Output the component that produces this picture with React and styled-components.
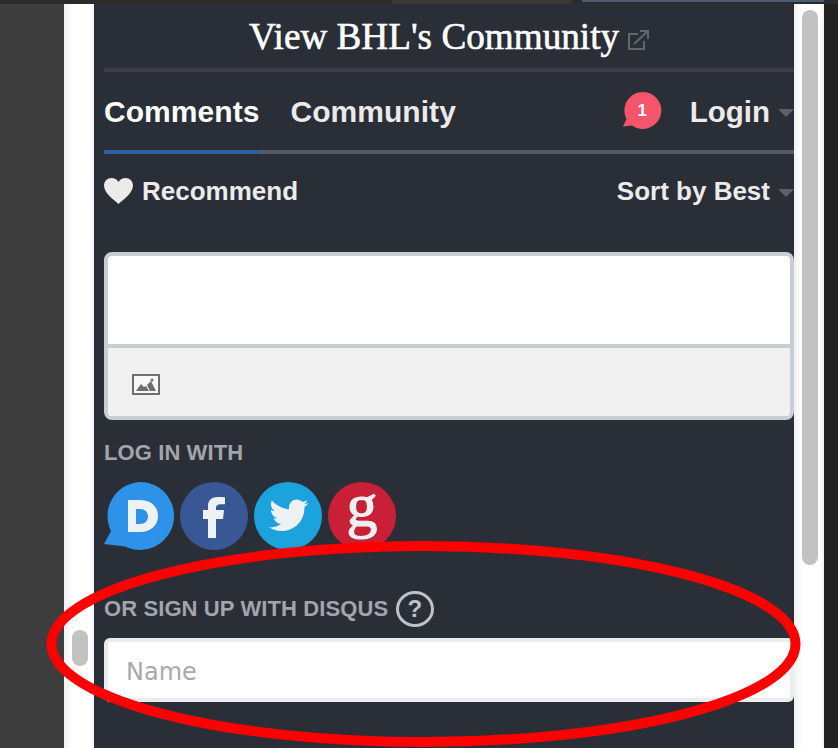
import React from "react";
import styled, { createGlobalStyle } from "styled-components";

const Global = createGlobalStyle`
    html, body {
        margin: 0;
        padding: 0;
        height: 100%;
        overflow: hidden;
        background: #222222;
    }
`

const Page = styled.div`
    position: relative;
    width: 838px;
    height: 748px;
    overflow: hidden;
    display: flex;
    flex-direction: column;
`

const TopStrip = styled.div`
    height: 4px;
    flex-shrink: 0;
    display: flex;
    align-items: flex-start;
    background: #2b2b2b;
`

const TopSegment = styled.div`
    width: ${(p) => p.$w}px;
    height: ${(p) => p.$h}px;
    background: ${(p) => p.$color};
`

const Body = styled.div`
    flex: 1;
    display: flex;
    min-height: 0;
`

const LeftSide = styled.div`
    width: 64px;
    background: #3d3d3d;
`

const RightSide = styled.div`
    width: 14px;
    background: #222222;
`

const Gutter = styled.div`
    position: relative;
    width: 30px;
    background: linear-gradient(to right, #f1f1f1 0, #ffffff 8px, #ffffff 26px, #f1f1f1 100%);
`

const Thumb = styled.div`
    position: absolute;
    left: 8px;
    top: ${(p) => p.$top}px;
    width: 16px;
    height: ${(p) => p.$h}px;
    border-radius: 8px;
    background: #c2c2c2;
`

const Panel = styled.div`
    width: 700px;
    background: #2a2e37;
    padding: 0 0 0 10px;
    box-sizing: border-box;
    font-family: "Liberation Sans", Arial, sans-serif;
`

const TitleRow = styled.div`
    height: 64px;
    border-bottom: 4px solid #3a3d46;
    display: flex;
    align-items: center;
    justify-content: center;
    gap: 8px;
`

const Title = styled.h1`
    margin: 0;
    font-family: "Liberation Serif", Georgia, serif;
    font-size: 37.2px;
    font-weight: 400;
    color: #ffffff;
    -webkit-text-stroke: 0.6px #ffffff;
`

const Tabs = styled.div`
    height: 78px;
    border-bottom: 4px solid #585a63;
    display: flex;
    align-items: center;
`

const Tab = styled.div`
    font-size: 30px;
    font-weight: 700;
    letter-spacing: 0.05px;
    color: ${(p) => (p.$active ? "#ffffff" : "#eaeaea")};
    margin-right: 31px;
    height: 82px;
    margin-bottom: -4px;
    padding-top: 2px;
    box-sizing: border-box;
    display: flex;
    align-items: center;
    border-bottom: 4px solid ${(p) => (p.$active ? "#2a5f9e" : "transparent")};
`

const Spacer = styled.div`
    flex: 1;
`

const Badge = styled.div`
    position: relative;
    width: 38px;
    height: 38px;
    margin-right: 29px;
`

const BadgeCount = styled.span`
    position: absolute;
    left: 1px;
    right: 0;
    top: 9px;
    text-align: center;
    font-size: 17px;
    line-height: 20px;
    font-weight: 700;
    color: #ffffff;
`

const MenuLabel = styled.div`
    display: flex;
    align-items: center;
    gap: 8px;
    font-size: ${(p) => p.$size}px;
    padding-top: 2px;
    font-weight: 700;
    color: #ebebeb;
`

const Caret = styled.span`
    width: 0;
    height: 0;
    border-left: 8px solid transparent;
    border-right: 8px solid transparent;
    border-top: 8px solid #5f616a;
    margin-top: 2px;
`

const ActionRow = styled.div`
    height: 73px;
    display: flex;
    align-items: center;
    justify-content: space-between;
`

const Recommend = styled.div`
    display: flex;
    align-items: center;
    gap: 9px;
    font-size: 26px;
    font-weight: 700;
    color: #ebebeb;
`

const RecommendText = styled.span`
    padding-top: 2px;
`

const Editor = styled.div`
    margin-top: 25px;
    height: 168px;
    border: 4px solid #c6ced1;
    border-radius: 8px;
    background: #ffffff;
    box-sizing: border-box;
    display: flex;
    flex-direction: column;
    overflow: hidden;
`

const EditorInput = styled.div`
    height: 88px;
    border-bottom: 4px solid #c6ced1;
`

const EditorBar = styled.div`
    flex: 1;
    background: #f1f1f1;
    display: flex;
    align-items: center;
    padding: 4px 0 0 24px;
`

const SectionLabel = styled.div`
    font-size: 22px;
    line-height: 26px;
    font-weight: 700;
    letter-spacing: 0.1px;
    color: #a3a5ab;
    display: flex;
    align-items: center;
    gap: 8px;
`

const LoginSection = styled.div`
    margin-top: 20px;
`

const Socials = styled.div`
    display: flex;
    gap: 6px;
    margin-top: 16px;
    height: 68px;
`

const SignupSection = styled.div`
    margin-top: 41px;
`

const NameInput = styled.div`
    margin-top: 11px;
    height: 64px;
    border: 4px solid #e9edee;
    border-radius: 6px;
    background: #ffffff;
    box-sizing: border-box;
    display: flex;
    align-items: center;
    padding: 3px 0 0 18px;
    font-family: "DejaVu Sans", "Liberation Sans", sans-serif;
    font-size: 24px;
    color: #a9a9a9;
`

const HelpIcon = styled.svg`
    width: 38px;
    height: 36px;
    display: block;
`

const LinkIcon = styled.svg`
    width: 22px;
    height: 20px;
    margin-top: 8px;
`

const SocialCircle = styled.svg`
    width: 68px;
    height: 68px;
    overflow: visible;
`

const Annotation = styled.svg`
    position: absolute;
    left: 0;
    top: 0;
    pointer-events: none;
`

const ExternalLink = () => (
    <LinkIcon viewBox="0 0 22 20" fill="none" stroke="#63666d" strokeWidth="2">
        <path d="M11 4H2v15h15v-8" />
        <path d="M7 14L20 2M13 1h8v8" />
    </LinkIcon>
);

const Heart = () => (
    <svg width="29" height="26" viewBox="0 0 29 26">
        <path fill="#ebebeb" d="M14.5 26C11 22.5 0 15.500 0 7.500 0 3 3.500 0 7.500 0c3 0 5.500 1.500 7 4 1.500-2.500 4-4 7-4C25.500 0 29 3 29 7.500c0 8-11 15-14.500 18.500z" />
    </svg>
);

const ImageIcon = () => (
    <svg width="28" height="21" viewBox="0 0 28 21">
        <rect x="1" y="1" width="26" height="19" fill="#f8f8f8" stroke="#6e6e6e" strokeWidth="2" />
        <path fill="#6e6e6e" d="M4 17l5-7 3 3 2-1 3 5zM15 11l4-4 5 10h-6z" />
        <circle cx="20" cy="6" r="1.500" fill="#6e6e6e" />
    </svg>
);

const Circle = ({ color, children }) => (
    <SocialCircle viewBox="0 0 68 68">
        <circle cx="34" cy="34" r="34" fill={color} />
        {children}
    </SocialCircle>
);

const DisqusIcon = () => (
    <svg width="70" height="68" viewBox="0 0 70 68">
        <path fill="#2e92e8" d="M36 0a34 34 0 1 1-15 64.500L0 62l7-13A34 34 0 0 1 36 0z" />
        <path fill="#eef1f4" fillRule="evenodd" d="M24 18h12c10 0 18 6 18 16s-8 16-18 16H24zM32 27v15h4c5 0 8-3 8-7.500S41 27 36 27z" />
    </svg>
);

const FacebookIcon = () => (
    <Circle color="#3a5795">
        <path fill="#eef1f4" d="M28 56V37h-5v-9h5v-4c0-6 4-9 10-9 3 0 5 0 7 .3v7h-4c-3 0-5 1-5 4V28h8l-1 9h-7v19z" />
    </Circle>
);

const TwitterIcon = () => (
    <Circle color="#1ca3de">
        <path fill="#eef1f4" d="M54 21c-1.500.7-3 1.100-4 1.300 1.500-1 2.600-2.400 3-4-1.400.8-3 1.400-4.500 1.700C47 18.500 45 17.500 43 17.500c-4.500 0-8 3.500-8 8 0 .6 0 1.200.2 1.800C29 27 23 24 18 18.500c-2 3.500-1 8 2.500 10.500-1.300 0-2.500-.4-3.500-1 0 4 2.800 7.300 6.500 8-1.200.4-2.500.4-3.700.2 1 3.200 4 5.500 7.500 5.600-3.500 2.700-8 4-12.300 3.500 3.600 2.300 7.800 3.700 12.400 3.700 15 0 23.600-12.500 23-24 1.600-1.100 3-2.500 4-4z" />
    </Circle>
);

const GoogleIcon = () => (
    <Circle color="#c91f37">
        <text x="34" y="44" textAnchor="middle" fontFamily="Liberation Serif" fontSize="62" fill="#eef1f4" stroke="#eef1f4" strokeWidth="1.200">g</text>
    </Circle>
);

const App = () => {
    return (
        <Page>
            <Global />
            <TopStrip>
                <TopSegment $w={392} $h={4} $color="#2b2b2b" />
                <TopSegment $w={180} $h={4} $color="#3b3937" />
                <TopSegment $w={10} $h={4} $color="#2b2b2b" />
                <TopSegment $w={242} $h={2} $color="#4a5d74" />
            </TopStrip>
            <Body>
                <LeftSide />
                <Gutter>
                    <Thumb $top={626} $h={36} />
                </Gutter>
                <Panel>
                    <TitleRow>
                        <Title>View BHL's Community</Title>
                        <ExternalLink />
                    </TitleRow>
                    <Tabs>
                        <Tab $active>Comments</Tab>
                        <Tab>Community</Tab>
                        <Spacer />
                        <Badge>
                            <svg width="39" height="38" viewBox="0 0 39 38">
                                <path fill="#f5556b" d="M20 0a18.500 18.500 0 1 1-11 33.500L0 34.500 3.500 27A18.500 18.500 0 0 1 20 0z" />
                            </svg>
                            <BadgeCount>1</BadgeCount>
                        </Badge>
                        <MenuLabel $size={29.5}>Login<Caret /></MenuLabel>
                    </Tabs>
                    <ActionRow>
                        <Recommend><Heart /><RecommendText>Recommend</RecommendText></Recommend>
                        <MenuLabel $size={26}>Sort by Best<Caret /></MenuLabel>
                    </ActionRow>
                    <Editor>
                        <EditorInput />
                        <EditorBar><ImageIcon /></EditorBar>
                    </Editor>
                    <LoginSection>
                        <SectionLabel>LOG IN WITH</SectionLabel>
                        <Socials>
                            <DisqusIcon />
                            <FacebookIcon />
                            <TwitterIcon />
                            <GoogleIcon />
                        </Socials>
                    </LoginSection>
                    <SignupSection>
                        <SectionLabel>
                            OR SIGN UP WITH DISQUS
                            <HelpIcon viewBox="0 0 38 36">
                                <ellipse cx="19" cy="18" rx="17.500" ry="16.500" fill="none" stroke="#c0c1c5" strokeWidth="3" />
                                <text x="19" y="26" textAnchor="middle" fontFamily="Liberation Sans" fontWeight="700" fontSize="24" fill="#c0c1c5">?</text>
                            </HelpIcon>
                        </SectionLabel>
                        <NameInput>Name</NameInput>
                    </SignupSection>
                </Panel>
                <Gutter>
                    <Thumb $top={6} $h={555} />
                </Gutter>
                <RightSide />
            </Body>
            <Annotation width="838" height="748" viewBox="0 0 838 748">
                <ellipse cx="423.500" cy="644" rx="372" ry="98" fill="none" stroke="#fe0000" strokeWidth="10" />
            </Annotation>
        </Page>
    );
};

export default App;
